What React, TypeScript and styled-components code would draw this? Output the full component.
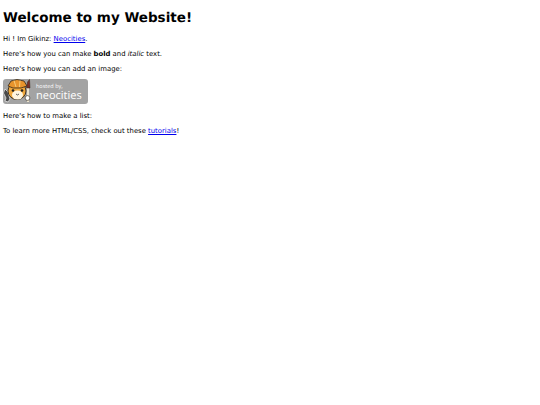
import React from 'react';
import styled, { createGlobalStyle } from 'styled-components';

const GlobalStyle = createGlobalStyle`
  html, body {
    margin: 0;
    padding: 0;
    background: #fff;
  }
`;

const Page = styled.div`
  padding: 3px;
  color: #000;
  font-family: "DejaVu Sans", Verdana, sans-serif;
  font-size: 6.87px;
  line-height: 10px;
  text-rendering: geometricPrecision;
`;

const Title = styled.h1`
  margin: 7px 0 7px;
  font-size: 13.5px;
  line-height: 17px;
  font-weight: bold;
`;

const Para = styled.p`
  margin: 0 0 5px;
`;

const Link = styled.a`
  color: #0000ee;
  text-decoration: underline;
`;

const Badge = styled.div`
  display: flex;
  align-items: center;
  width: 85px;
  height: 25px;
  margin: 0 0 7px;
  border-radius: 3px;
  background: #a3a3a3;
  color: #fff;
  font-family: "Open Sans", sans-serif;
`;

const BadgeText = styled.div`
  display: flex;
  flex-direction: column;
  margin-left: 2px;
  padding-top: 1px;
`;

const Hosted = styled.span`
  font-size: 5.5px;
  line-height: 7px;
`;

const Brand = styled.span`
  font-size: 11px;
  line-height: 12px;
`;

const BadgeCat = () => (
  <svg width="31" height="25" viewBox="0 0 31 25">
    <path d="M2 10 L5 13 L7 20 L5 23 L2 22 L3 19 L0.5 14 Z" fill="#4a4a4a" stroke="#efefef" strokeWidth="0.7" />
    <ellipse cx="14" cy="12" rx="9" ry="8.5" fill="#f0a83c" stroke="#33281a" strokeWidth="0.9" />
    <path d="M5 7 L8 2 L14 0.5 L21 2 L24 7 L18 9 L10 9 Z" fill="#e8942c" stroke="#33281a" strokeWidth="0.8" />
    <path d="M11 1.5 L13 8 M17 1.5 L16.5 8" stroke="#fbd98c" strokeWidth="0.8" />
    <ellipse cx="14.5" cy="16" rx="5.5" ry="4.5" fill="#fff6e0" />
    <circle cx="10" cy="11.5" r="1.3" fill="#1e1e1e" />
    <circle cx="19" cy="11.5" r="1.3" fill="#1e1e1e" />
    <path d="M13 15 L14.5 16 L16 15" fill="none" stroke="#1e1e1e" strokeWidth="0.7" />
    <path d="M25 9 L25 23" stroke="#f4ead2" strokeWidth="1.8" />
    <path d="M23.5 9 L24.5 3 L26.5 0.5 L27 9 Z" fill="#7a2f28" stroke="#33281a" strokeWidth="0.5" />
    <circle cx="24.5" cy="19" r="2.4" fill="#fff" stroke="#33281a" strokeWidth="0.6" />
  </svg>
);

export default function App() {
  return (
    <Page>
      <GlobalStyle />
      <Title>Welcome to my Website!</Title>
      <Para>
        Hi ! Im Gikinz: <Link href="#">Neocities</Link>.
      </Para>
      <Para>
        Here's how you can make <b>bold</b> and <i>italic</i> text.
      </Para>
      <Para>Here's how you can add an image:</Para>
      <Badge>
        <BadgeCat />
        <BadgeText>
          <Hosted>hosted by,</Hosted>
          <Brand>neocities</Brand>
        </BadgeText>
      </Badge>
      <Para>Here's how to make a list:</Para>
      <Para>
        To learn more HTML/CSS, check out these <Link href="#">tutorials</Link>!
      </Para>
    </Page>
  );
}
